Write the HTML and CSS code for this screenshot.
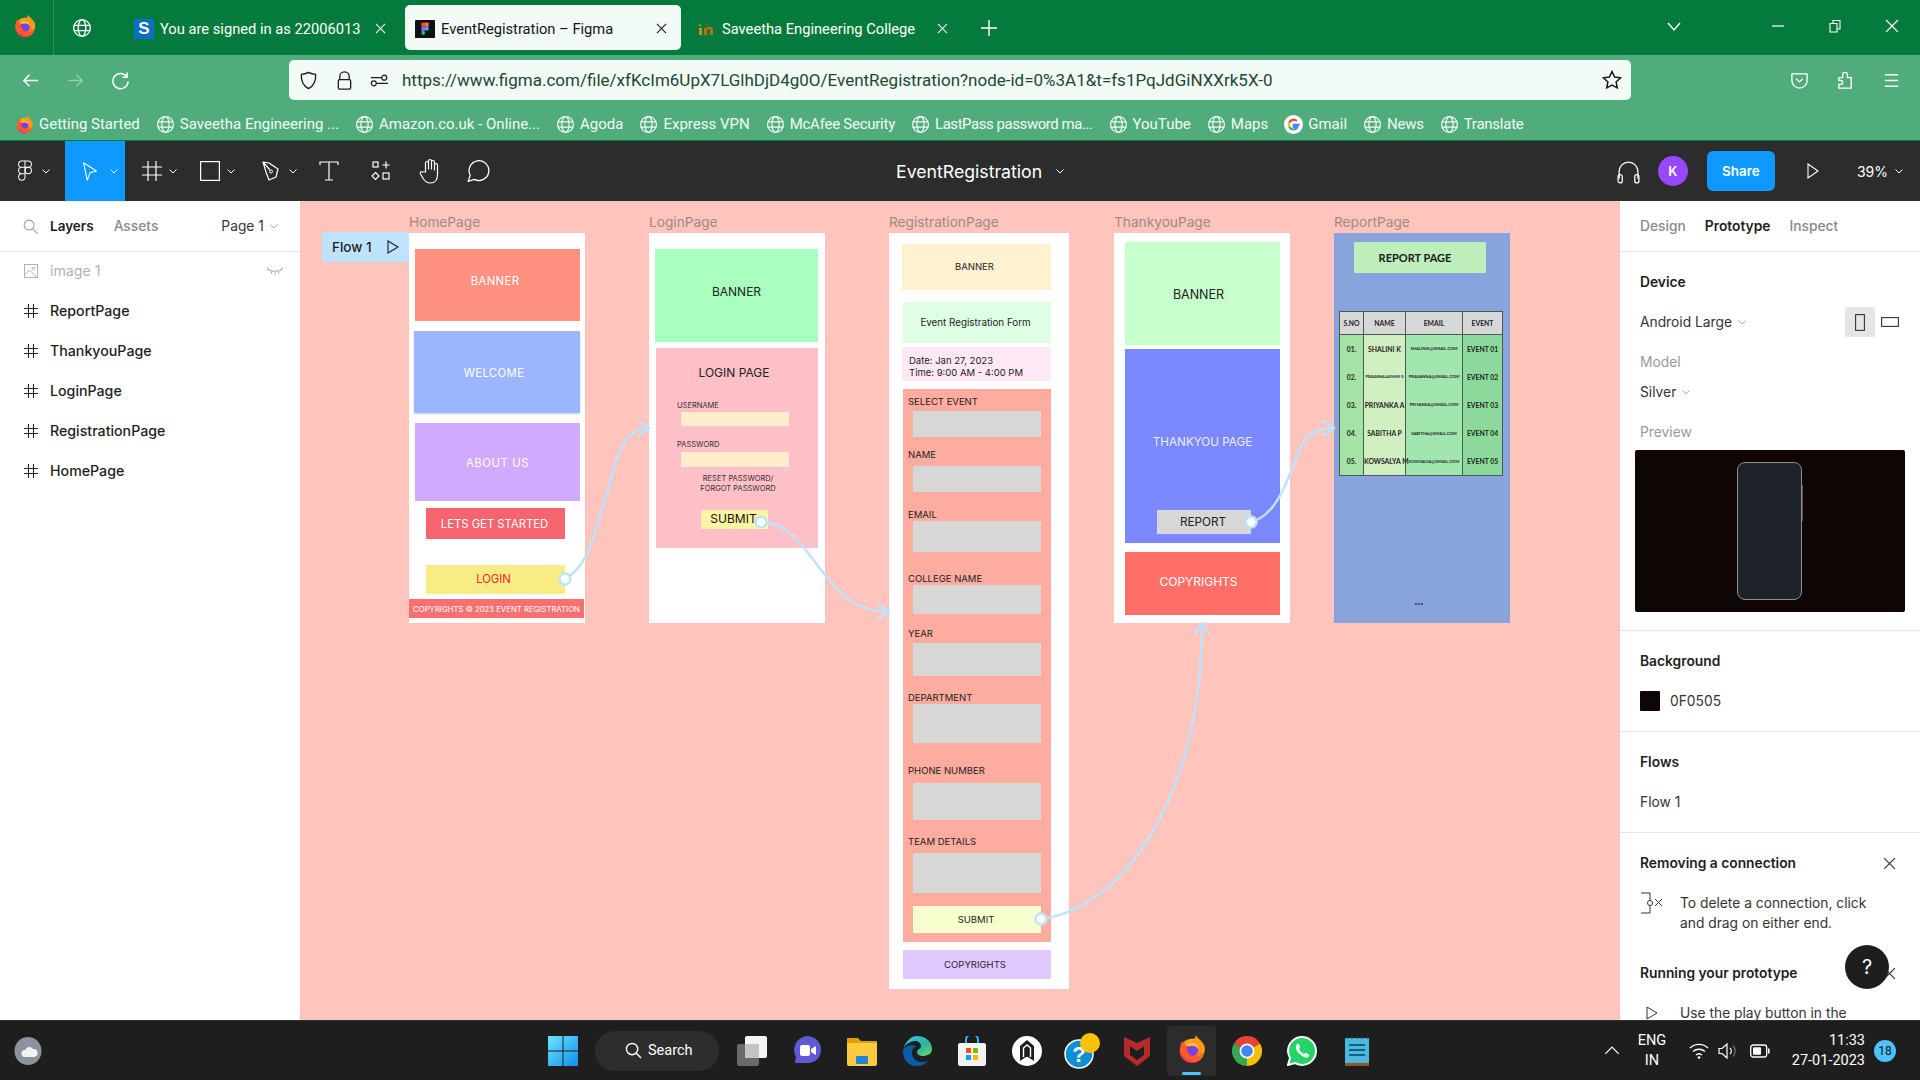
FILE: index.html
```html
<!DOCTYPE html>
<html lang="en">
<head>
  <meta charset="UTF-8">
  <title>EventRegistration – Figma</title>
  <link rel="stylesheet" href="styles.css">
</head>
<body>
  <svg class="icon-defs" aria-hidden="true">
    <defs>
      <linearGradient id="ffBody" x1="0.7" y1="0" x2="0.2" y2="1">
        <stop offset="0" stop-color="#ffc02e"/>
        <stop offset="0.5" stop-color="#ff7a1a"/>
        <stop offset="1" stop-color="#f0265e"/>
      </linearGradient>
      <linearGradient id="winBlue" x1="0" y1="0" x2="1" y2="1">
        <stop offset="0" stop-color="#6fe3ff"/>
        <stop offset="1" stop-color="#0f8fe8"/>
      </linearGradient>
      <linearGradient id="edgeGrad" x1="0" y1="0" x2="1" y2="1">
        <stop offset="0" stop-color="#35c1f1"/>
        <stop offset="0.6" stop-color="#2fb4a0"/>
        <stop offset="1" stop-color="#6fdc57"/>
      </linearGradient>
    </defs>
    <symbol id="i-globe" viewBox="0 0 20 20">
      <g fill="none" stroke="currentColor" stroke-width="1.3">
        <circle cx="10" cy="10" r="8.3"/>
        <ellipse cx="10" cy="10" rx="3.8" ry="8.3"/>
        <path d="M1.7 7.3h16.6M1.7 12.7h16.6"/>
      </g>
    </symbol>
    <symbol id="i-firefox" viewBox="0 0 32 32">
      <circle cx="16" cy="18" r="13" fill="url(#ffBody)"/>
      <path d="M20 1c2 4 7 6 9 11 1 3 1 6 0 8L14 9c2-2 6-4 6-8z" fill="#ff9a14"/>
      <circle cx="16" cy="17" r="6.5" fill="#7542e5"/>
      <path d="M5 8c-3 7-1 17 8 20 8 2 14-3 15-7-5 5-14 4-17-3-1-3 0-5 2-6-4 0-6-2-8-4z" fill="#ff5a2c"/>
      <path d="M9 12c3-3 8-3 11-1 2 1 3 3 3 5-3-3-6-4-9-3-2 0-4 0-5-1z" fill="#ffbd4f"/>
    </symbol>
    <symbol id="i-hash" viewBox="0 0 14 14">
      <path d="M4.5 0v14M9.5 0v14M0 4.5h14M0 9.5h14" fill="none" stroke="currentColor" stroke-width="1.1"/>
    </symbol>
    <symbol id="i-chev" viewBox="0 0 8 5">
      <path d="M.5.5 4 4 7.5.5" fill="none" stroke="currentColor" stroke-width="1"/>
    </symbol>
    <symbol id="i-close" viewBox="0 0 12 12">
      <path d="M1 1l10 10M11 1 1 11" fill="none" stroke="currentColor" stroke-width="1.1"/>
    </symbol>
  </svg>

  <div class="tabbar">
    <div class="browser-logo"><svg class="ff-icon"><use href="#i-firefox"/></svg></div>
    <div class="tab-globe"><svg class="globe-big"><use href="#i-globe"/></svg></div>
    <div class="tab">
      <span class="favicon fav-s">S</span>
      <span class="tab-title">You are signed in as 22006013</span>
      <svg class="tab-close"><use href="#i-close"/></svg>
    </div>
    <div class="tab tab-active">
      <svg class="favicon" viewBox="0 0 22 20">
        <rect width="22" height="20" rx="1" fill="#111"/>
        <rect x="7" y="3" width="4" height="4.5" fill="#f24e1e"/>
        <rect x="11" y="3" width="4" height="4.5" fill="#ff7262"/>
        <rect x="7" y="7.5" width="4" height="4.5" fill="#a259ff"/>
        <circle cx="13" cy="9.7" r="2.2" fill="#1abcfe"/>
        <rect x="7" y="12" width="4" height="4.5" rx="2" fill="#0acf83"/>
      </svg>
      <span class="tab-title">EventRegistration – Figma</span>
      <svg class="tab-close"><use href="#i-close"/></svg>
    </div>
    <div class="tab">
      <svg class="favicon" viewBox="0 0 20 20">
        <path d="M3 9h3v7H3zM2 7l2-2 2 2z" fill="#d9861a"/>
        <path d="M8 9h3v7H8zM11 8c3-1 6 0 6 3v5h-3v-5c0-1-2-1-3 0z" fill="#b5701c"/>
        <path d="M7 6l4-2 4 2-4 1z" fill="#3c6a2c"/>
      </svg>
      <span class="tab-title">Saveetha Engineering College</span>
      <svg class="tab-close"><use href="#i-close"/></svg>
    </div>
    <svg class="tab-plus" viewBox="0 0 16 16"><path d="M8 0v16M0 8h16" stroke="currentColor" stroke-width="1.4"/></svg>
    <svg class="tab-list" viewBox="0 0 14 9"><path d="M1 1l6 7 6-7" fill="none" stroke="currentColor" stroke-width="1.3"/></svg>
    <div class="win-buttons">
      <svg viewBox="0 0 14 14"><path d="M1 7h12" stroke="currentColor" stroke-width="1.2"/></svg>
      <svg viewBox="0 0 14 14"><path d="M2 4.5h7v8.500H2zM5 4.5V1.500h7v8.500H9" fill="none" stroke="currentColor" stroke-width="1.1"/></svg>
      <svg viewBox="0 0 14 14"><path d="M1 1l12 12M13 1 1 13" stroke="currentColor" stroke-width="1.1"/></svg>
    </div>
  </div>

  <div class="navbar">
    <svg class="nav-btn" viewBox="0 0 20 20"><path d="M18 10H3M9 4l-6 6 6 6" fill="none" stroke="currentColor" stroke-width="1.6"/></svg>
    <svg class="nav-btn nav-dim" viewBox="0 0 20 20"><path d="M2 10h15M11 4l6 6-6 6" fill="none" stroke="currentColor" stroke-width="1.6"/></svg>
    <svg class="nav-btn" viewBox="0 0 20 20"><path d="M16.500 6A8 8 0 1 0 18 11M17 1.500V6.500H12" fill="none" stroke="currentColor" stroke-width="1.6"/></svg>
    <div class="urlbar">
      <svg class="url-icon" viewBox="0 0 20 20"><path d="M10 1.500c2.500 1.500 4.500 2 7.500 2 .5 7-1.500 12-7.500 15-6-3-8-8-7.500-15 3 0 5-.5 7.500-2z" fill="none" stroke="#1c1c1c" stroke-width="1.4"/></svg>
      <svg class="url-icon url-lock" viewBox="0 0 20 20"><path d="M5 9V6a5 5 0 0 1 10 0v3" fill="none" stroke="#1c1c1c" stroke-width="1.4"/><rect x="3.500" y="9" width="13" height="10" rx="1.500" fill="none" stroke="#1c1c1c" stroke-width="1.4"/></svg>
      <svg class="url-icon url-perm" viewBox="0 0 20 20"><path d="M1 7h11M7 13h12" stroke="#1c1c1c" stroke-width="1.4"/><circle cx="15" cy="7" r="2.600" fill="none" stroke="#1c1c1c" stroke-width="1.3"/><circle cx="4" cy="13" r="2.600" fill="none" stroke="#1c1c1c" stroke-width="1.3"/></svg>
      <span class="url-text">https://www.figma.com/file/xfKcIm6UpX7LGlhDjD4g0O/EventRegistration?node-id=0%3A1&amp;t=fs1PqJdGiNXXrk5X-0</span>
      <svg class="url-star" viewBox="0 0 20 20"><path d="M10 1.500l2.600 5.600 6 .7-4.500 4.100 1.200 6L10 15l-5.300 2.900 1.200-6L1.400 7.800l6-.7z" fill="none" stroke="#1c1c1c" stroke-width="1.500"/></svg>
    </div>
    <div class="nav-right">
      <svg viewBox="0 0 20 20"><path d="M2 3h16v7a8 8 0 0 1-16 0z" fill="none" stroke="currentColor" stroke-width="1.400" stroke-linejoin="round"/><path d="M6.500 8l3.500 3.500L13.500 8" fill="none" stroke="currentColor" stroke-width="1.400"/></svg>
      <svg viewBox="0 0 20 20"><path d="M3 7h4V4a2.500 2.500 0 0 1 5 0v3h4v11H3v-4h2a2 2 0 0 0 0-4H3z" fill="none" stroke="currentColor" stroke-width="1.400"/></svg>
      <svg viewBox="0 0 20 20"><path d="M3 4h14M3 10h14M3 16h14" stroke="currentColor" stroke-width="1.500"/></svg>
    </div>
  </div>

  <div class="bookmarks">
    <span class="bookmark"><svg class="bm-icon"><use href="#i-firefox"/></svg>Getting Started</span>
    <span class="bookmark"><svg class="bm-icon"><use href="#i-globe"/></svg>Saveetha Engineering ...</span>
    <span class="bookmark"><svg class="bm-icon"><use href="#i-globe"/></svg>Amazon.co.uk - Online...</span>
    <span class="bookmark"><svg class="bm-icon"><use href="#i-globe"/></svg>Agoda</span>
    <span class="bookmark"><svg class="bm-icon"><use href="#i-globe"/></svg>Express VPN</span>
    <span class="bookmark bm-narrow"><svg class="bm-icon"><use href="#i-globe"/></svg>McAfee Security</span>
    <span class="bookmark bm-narrower"><svg class="bm-icon"><use href="#i-globe"/></svg>LastPass password ma...</span>
    <span class="bookmark"><svg class="bm-icon"><use href="#i-globe"/></svg>YouTube</span>
    <span class="bookmark"><svg class="bm-icon"><use href="#i-globe"/></svg>Maps</span>
    <span class="bookmark">
      <svg class="bm-icon" viewBox="0 0 20 20">
        <circle cx="10" cy="10" r="10" fill="#fff"/>
        <path d="M16.500 10.200h-6.300v2.300h3.700a3.900 3.900 0 0 1-3.700 2.700" fill="none" stroke="#4285f4" stroke-width="2.200"/>
        <path d="M10.200 15.200a5.200 5.200 0 0 1-4.700-3" fill="none" stroke="#34a853" stroke-width="2.200"/>
        <path d="M5.500 12.200a5.200 5.200 0 0 1 0-4.400" fill="none" stroke="#fbbc05" stroke-width="2.200"/>
        <path d="M5.500 7.800a5.200 5.200 0 0 1 8-1.500" fill="none" stroke="#ea4335" stroke-width="2.200"/>
      </svg>Gmail</span>
    <span class="bookmark bm-narrow"><svg class="bm-icon"><use href="#i-globe"/></svg>News</span>
    <span class="bookmark bm-narrow"><svg class="bm-icon"><use href="#i-globe"/></svg>Translate</span>
  </div>

  <div class="toolbar">
    <div class="tool tool-logo">
      <svg class="tool-icon" viewBox="0 0 16 24"><path d="M8 1H4.500a3.500 3.500 0 0 0 0 7H8zM8 1h3.500a3.500 3.500 0 0 1 0 7H8zM8 8H4.500a3.500 3.500 0 0 0 0 7H8zM8 15H4.500A3.500 3.500 0 1 0 8 18.500z" fill="none" stroke="#fff" stroke-width="1.100"/><circle cx="11.500" cy="11.500" r="3.500" fill="none" stroke="#fff" stroke-width="1.100"/></svg>
      <svg class="tool-chev"><use href="#i-chev"/></svg>
    </div>
    <div class="tool tool-move">
      <svg class="tool-icon" viewBox="0 0 20 24"><path d="M3 3l14 9-7 2-3 8z" fill="none" stroke="#fff" stroke-width="1.200" stroke-linejoin="round"/></svg>
      <svg class="tool-chev"><use href="#i-chev"/></svg>
    </div>
    <div class="tool tool-frame">
      <svg class="tool-icon" viewBox="0 0 20 20"><path d="M6 0v20M14 0v20M0 6h20M0 14h20" fill="none" stroke="#fff" stroke-width="1.200"/></svg>
      <svg class="tool-chev"><use href="#i-chev"/></svg>
    </div>
    <div class="tool tool-rect">
      <svg class="tool-icon" viewBox="0 0 20 20"><rect x=".6" y=".6" width="18.800" height="18.800" fill="none" stroke="#fff" stroke-width="1.200"/></svg>
      <svg class="tool-chev"><use href="#i-chev"/></svg>
    </div>
    <div class="tool tool-pen">
      <svg class="tool-icon" viewBox="0 0 20 20"><path d="M1 1l6 1 9 6-2 8-7 3-3-8zM1 1l7 8" fill="none" stroke="#fff" stroke-width="1.200" stroke-linejoin="round"/><circle cx="9" cy="10.500" r="1.500" fill="none" stroke="#fff"/></svg>
      <svg class="tool-chev"><use href="#i-chev"/></svg>
    </div>
    <div class="tool tool-t">
      <svg class="tool-icon" viewBox="0 0 20 20"><path d="M1 4V1h18v3M10 1v18M6 19h8" fill="none" stroke="#fff" stroke-width="1.200"/></svg>
    </div>
    <div class="tool tool-comp">
      <svg class="tool-icon" viewBox="0 0 20 20"><rect x="2" y="1" width="5" height="5" fill="none" stroke="#fff" stroke-width="1.200"/><path d="M15 .5v7M11.500 4h7" stroke="#fff" stroke-width="1.200"/><path d="M4.500 11.500l3.500 3.500-3.500 3.500L1 15z" fill="none" stroke="#fff" stroke-width="1.200"/><rect x="12" y="12" width="6" height="6" fill="none" stroke="#fff" stroke-width="1.200"/></svg>
    </div>
    <div class="tool tool-hand">
      <svg class="tool-icon" viewBox="0 0 24 26"><path d="M7 14V5a1.500 1.500 0 0 1 3 0v6V3a1.500 1.500 0 0 1 3 0v8V4a1.500 1.500 0 0 1 3 0v8V7a1.500 1.500 0 0 1 3 0v10c0 5-3 8-7 8-3 0-5-1-7-4l-3-5c-1-2 1-3 2-2z" fill="none" stroke="#fff" stroke-width="1.200" stroke-linejoin="round"/></svg>
    </div>
    <div class="tool tool-comment">
      <svg class="tool-icon" viewBox="0 0 24 24"><path d="M3 22l2-6a9.500 9.500 0 1 1 4 4z" fill="none" stroke="#fff" stroke-width="1.200" stroke-linejoin="round"/></svg>
    </div>
    <div class="file-title">EventRegistration<svg class="tool-chev"><use href="#i-chev"/></svg></div>
    <div class="tool-right">
      <svg class="headphones" viewBox="0 0 24 24"><path d="M3 19v-7a9 9 0 0 1 18 0v7" fill="none" stroke="#fff" stroke-width="1.200"/><rect x="2" y="15" width="4" height="8" rx="2" fill="none" stroke="#fff" stroke-width="1.200"/><rect x="18" y="15" width="4" height="8" rx="2" fill="none" stroke="#fff" stroke-width="1.200"/></svg>
      <span class="avatar">K</span>
      <span class="share-btn">Share</span>
      <svg class="present" viewBox="0 0 12 16"><path d="M1 1l10 7-10 7z" fill="none" stroke="#fff" stroke-width="1.100"/></svg>
      <span class="zoom-level">39%<svg class="tool-chev"><use href="#i-chev"/></svg></span>
    </div>
  </div>

  <div class="workspace">
    <aside class="left-panel">
      <div class="left-head">
        <svg class="search-icon" viewBox="0 0 16 16"><circle cx="6.500" cy="6.500" r="5.300" fill="none" stroke="#999" stroke-width="1.100"/><path d="M10.500 10.500l5 5" stroke="#999" stroke-width="1.100"/></svg>
        <span class="head-on">Layers</span>
        <span class="head-off">Assets</span>
        <span class="page-pick">Page 1<svg class="small-chev"><use href="#i-chev"/></svg></span>
      </div>
      <ul class="layers">
        <li class="layer layer-hidden">
          <svg class="layer-icon" viewBox="0 0 14 14"><rect x=".5" y=".5" width="13" height="13" fill="none" stroke="#b3b3b3"/><circle cx="9.500" cy="4.500" r="1.300" fill="none" stroke="#b3b3b3"/><path d="M.5 11l5-5 7.500 7.500" fill="none" stroke="#b3b3b3"/></svg>
          image 1
          <svg class="eye-off" viewBox="0 0 18 8"><path d="M1 2c5 3 11 3 16 0M1 0l3 3.500M17 0l-3 3.500M5 7l1-3M13 7l-1-3M9 8V5" fill="none" stroke="#999" stroke-width=".8"/></svg>
        </li>
        <li class="layer"><svg class="layer-icon"><use href="#i-hash"/></svg>ReportPage</li>
        <li class="layer"><svg class="layer-icon"><use href="#i-hash"/></svg>ThankyouPage</li>
        <li class="layer"><svg class="layer-icon"><use href="#i-hash"/></svg>LoginPage</li>
        <li class="layer"><svg class="layer-icon"><use href="#i-hash"/></svg>RegistrationPage</li>
        <li class="layer"><svg class="layer-icon"><use href="#i-hash"/></svg>HomePage</li>
      </ul>
    </aside>

    <main class="canvas">
      <div class="flow-tag">Flow 1<svg class="flow-play" viewBox="0 0 12 14"><path d="M1 1l10 6-10 6z" fill="none" stroke="#1e1e1e" stroke-width="1.100"/></svg></div>

      <section class="frame-wrap wrap-home">
        <div class="frame-label">HomePage</div>
        <div class="frame">
          <div class="blk light home-banner">BANNER</div>
          <div class="blk light home-welcome">WELCOME</div>
          <div class="blk light home-about">ABOUT US</div>
          <div class="blk light home-start">LETS GET STARTED</div>
          <div class="blk home-login">LOGIN</div>
          <div class="blk light home-copy">COPYRIGHTS © 2023 EVENT REGISTRATION</div>
        </div>
      </section>

      <section class="frame-wrap wrap-login">
        <div class="frame-label">LoginPage</div>
        <div class="frame">
          <div class="blk login-banner">BANNER</div>
          <div class="login-box">
            <div class="login-title">LOGIN PAGE</div>
            <div class="login-label label-user">USERNAME</div>
            <div class="login-input input-user"></div>
            <div class="login-label label-pass">PASSWORD</div>
            <div class="login-input input-pass"></div>
            <div class="login-reset">RESET PASSWORD/<br>FORGOT PASSWORD</div>
            <div class="blk login-submit">SUBMIT</div>
          </div>
        </div>
      </section>

      <section class="frame-wrap wrap-reg">
        <div class="frame-label">RegistrationPage</div>
        <div class="frame frame-reg">
          <div class="blk reg-banner">BANNER</div>
          <div class="blk reg-title">Event Registration Form</div>
          <div class="reg-date">Date: Jan 27, 2023<br>Time: 9:00 AM - 4:00 PM</div>
          <div class="reg-form">
            <div class="reg-field field-select"><div class="reg-label">SELECT EVENT</div><div class="reg-input"></div></div>
            <div class="reg-field field-name"><div class="reg-label">NAME</div><div class="reg-input"></div></div>
            <div class="reg-field field-email"><div class="reg-label">EMAIL</div><div class="reg-input"></div></div>
            <div class="reg-field field-college"><div class="reg-label">COLLEGE NAME</div><div class="reg-input"></div></div>
            <div class="reg-field field-year"><div class="reg-label">YEAR</div><div class="reg-input"></div></div>
            <div class="reg-field field-dept"><div class="reg-label">DEPARTMENT</div><div class="reg-input"></div></div>
            <div class="reg-field field-phone"><div class="reg-label">PHONE NUMBER</div><div class="reg-input"></div></div>
            <div class="reg-field field-team"><div class="reg-label">TEAM DETAILS</div><div class="reg-input"></div></div>
            <div class="blk reg-submit">SUBMIT</div>
          </div>
          <div class="blk reg-copy">COPYRIGHTS</div>
        </div>
      </section>

      <section class="frame-wrap wrap-thanks">
        <div class="frame-label">ThankyouPage</div>
        <div class="frame">
          <div class="blk thanks-banner">BANNER</div>
          <div class="thanks-main">
            <div class="thanks-text">THANKYOU PAGE</div>
            <div class="blk thanks-report">REPORT</div>
          </div>
          <div class="blk light thanks-copy">COPYRIGHTS</div>
        </div>
      </section>

      <section class="frame-wrap wrap-report">
        <div class="frame-label">ReportPage</div>
        <div class="frame frame-report">
          <div class="blk report-title">REPORT PAGE</div>
          <table class="report-table">
            <thead>
              <tr><th>S.NO</th><th>NAME</th><th>EMAIL</th><th>EVENT</th></tr>
            </thead>
            <tbody>
              <tr><td>01.</td><td>SHALINI K</td><td>SHALINIK@GMAIL.COM</td><td>EVENT 01</td></tr>
              <tr><td>02.</td><td class="tiny-name">PRASANNALAKSHMI G</td><td>PRASANNA@GMAIL.COM</td><td>EVENT 02</td></tr>
              <tr><td>03.</td><td>PRIYANKA A</td><td>PRIYANKA@GMAIL.COM</td><td>EVENT 03</td></tr>
              <tr><td>04.</td><td>SABITHA P</td><td>SABITHA@GMAIL.COM</td><td>EVENT 04</td></tr>
              <tr><td>05.</td><td class="nowrap-name">KOWSALYA M</td><td>KOWSALYA@GMAIL.COM</td><td>EVENT 05</td></tr>
            </tbody>
          </table>
          <div class="report-dots">•••</div>
        </div>
      </section>

      <!-- prototype connections, viewBox is in screen pixels -->
      <svg class="links" viewBox="300 201 1320 819">
        <g fill="none" stroke="#bde3ff" stroke-width="2.5" stroke-linecap="round" stroke-linejoin="round">
          <path d="M565 579C590 565 595 530 605 500 615 465 620 428 649 428"/>
          <path d="M639 421l10 7-10 7"/>
          <path d="M762 522C790 522 805 550 825 575 845 600 860 612 889 611"/>
          <path d="M879 604l10 7-10 7"/>
          <path d="M1041 919C1120 910 1202 800 1202 623"/>
          <path d="M1195 633l7-10 7 10"/>
          <path d="M1251 522C1280 515 1290 470 1302 445 1310 432 1320 428 1334 428"/>
          <path d="M1324 421l10 7-10 7"/>
        </g>
        <g fill="#fff" stroke="#bde3ff" stroke-width="2.5">
          <circle cx="565" cy="579" r="5.500"/>
          <circle cx="761" cy="522" r="5.500"/>
          <circle cx="1041" cy="919" r="5.500"/>
          <circle cx="1251" cy="522" r="5.500"/>
        </g>
      </svg>
    </main>

    <aside class="right-panel">
      <div class="right-tabs">
        <span class="rtab">Design</span>
        <span class="rtab rtab-on">Prototype</span>
        <span class="rtab">Inspect</span>
      </div>
      <section class="prop-section">
        <div class="prop-row prop-title">Device</div>
        <div class="prop-row">
          Android Large<svg class="small-chev"><use href="#i-chev"/></svg>
          <span class="orient orient-on"><svg viewBox="0 0 10 17"><rect x=".6" y=".6" width="8.800" height="15.800" fill="none" stroke="#333" stroke-width="1.100"/></svg></span>
          <span class="orient-land"><svg viewBox="0 0 18 10"><rect x=".6" y=".6" width="16.800" height="8.800" fill="none" stroke="#333" stroke-width="1.100"/></svg></span>
        </div>
        <div class="prop-row prop-short prop-grey prop-model">Model</div>
        <div class="prop-row prop-short">Silver<svg class="small-chev"><use href="#i-chev"/></svg></div>
        <div class="prop-row prop-short prop-grey prop-preview">Preview</div>
        <div class="preview-box"><div class="phone"></div></div>
      </section>
      <section class="prop-section">
        <div class="prop-row prop-title">Background</div>
        <div class="prop-row"><span class="swatch"></span>0F0505</div>
      </section>
      <section class="prop-section">
        <div class="prop-row prop-title">Flows</div>
        <div class="prop-row">Flow 1</div>
      </section>
      <section class="help-section">
        <div class="prop-row prop-title">Removing a connection<svg class="help-x"><use href="#i-close"/></svg></div>
        <div class="help-body">
          <svg class="help-icon" viewBox="0 0 24 22"><path d="M1 1h9v20H1" fill="none" stroke="#333" stroke-width="1"/><circle cx="10" cy="11" r="2.500" fill="#fff" stroke="#333"/><path d="M15 7l7 7M22 7l-7 7" stroke="#333"/></svg>
          <p>To delete a connection, click and drag on either end.</p>
        </div>
        <div class="prop-row prop-title help-next">Running your prototype<svg class="help-x"><use href="#i-close"/></svg></div>
        <div class="help-body">
          <svg class="help-icon play-icon" viewBox="0 0 12 14"><path d="M1 1l10 6-10 6z" fill="none" stroke="#333"/></svg>
          <p>Use the play button in the</p>
        </div>
      </section>
      <div class="help-btn">?</div>
    </aside>
  </div>

  <footer class="taskbar">
    <svg class="weather" viewBox="0 0 28 28">
      <ellipse cx="14" cy="14" rx="13.500" ry="14" fill="#8b949e"/>
      <path d="M11 20a3.500 3.500 0 0 1 0-7 4.500 4.500 0 0 1 8-1 4 4 0 0 1 1 8z" fill="#f2f2f2"/>
    </svg>
    <div class="task-apps">
      <div class="app">
        <svg viewBox="0 0 30 30"><path d="M0 0h14.500v14.500H0zM15.500 0H30v14.500H15.500zM0 15.500h14.500V30H0zM15.500 15.500H30V30H15.500z" fill="url(#winBlue)"/></svg>
      </div>
      <div class="search-pill">
        <svg viewBox="0 0 18 18"><circle cx="7.500" cy="7.500" r="6" fill="none" stroke="#fff" stroke-width="1.500"/><path d="M12 12l5 5" stroke="#fff" stroke-width="1.500"/></svg>
        Search
      </div>
      <div class="app">
        <svg viewBox="0 0 30 30"><rect x="0" y="8" width="22" height="22" rx="2" fill="#6a6a6a"/><rect x="8" y="0" width="22" height="22" rx="2" fill="#f5f5f5"/><rect x="8" y="8" width="14" height="14" fill="#c4c4c4"/></svg>
      </div>
      <div class="app">
        <svg viewBox="0 0 30 30"><path d="M15 0a14 14 0 0 1 14 14c0 8-6 13-13 13H3l1-6A14 14 0 0 1 15 0z" fill="#5f5ad1"/><rect x="8" y="9" width="10" height="11" rx="2" fill="#fff"/><path d="M19 13l5-3v9l-5-3z" fill="#fff"/></svg>
      </div>
      <div class="app">
        <svg viewBox="0 0 30 30"><path d="M0 2h11l3 3h16v4H0z" fill="#e0a100"/><path d="M0 7h30v21a2 2 0 0 1-2 2H2a2 2 0 0 1-2-2z" fill="#fdca3f"/><rect x="9" y="20" width="12" height="8" rx="1" fill="#1a86d8"/></svg>
      </div>
      <div class="app">
        <svg viewBox="0 0 30 30"><path d="M15 0c9 0 15 6 15 13 0 5-5 7-9 7-4 0-6-2-6-4 0-3 4-3 4-6 0-3-3-5-6-5C7 5 1 10 1 16 2 7 8 0 15 0z" fill="url(#edgeGrad)"/><path d="M1 16C1 24 7 30 15 30c5 0 8-2 11-5-6 2-13 1-15-4-2-4-1-10 4-11-7-2-14 1-14 6z" fill="#0b5cad"/></svg>
      </div>
      <div class="app">
        <svg viewBox="0 0 30 30"><path d="M9 7V4a6 6 0 0 1 12 0v3" fill="none" stroke="#29b6f6" stroke-width="2"/><rect x="1" y="7" width="28" height="23" rx="2" fill="#f3f3f3"/><rect x="9" y="12" width="5" height="5" fill="#f25022"/><rect x="16" y="12" width="5" height="5" fill="#7fba00"/><rect x="9" y="19" width="5" height="5" fill="#00a4ef"/><rect x="16" y="19" width="5" height="5" fill="#ffb900"/></svg>
      </div>
      <div class="app">
        <svg viewBox="0 0 30 30"><circle cx="15" cy="15" r="15" fill="#fff"/><path d="M8 25V10l7-6 7 6v15l-6-4h-2z" fill="#1e1e1e"/><path d="M11.500 21v-9l3.500-3 3.500 3v9" fill="none" stroke="#fff" stroke-width="1.400"/></svg>
      </div>
      <div class="app app-help">
        <svg viewBox="0 0 36 36"><circle cx="15" cy="21" r="14" fill="#0d8fd6" stroke="#fff" stroke-width="1.500"/><text x="15" y="29" text-anchor="middle" class="help-q">?</text><circle cx="26" cy="10" r="10" fill="#ffc107"/></svg>
      </div>
      <div class="app">
        <svg class="mcafee-icon" viewBox="0 0 26 30"><path d="M0 1l13 6 13-6v19l-13 10L0 20z" fill="#b52b2b"/><path d="M6 10l7 5 7-5v9l-7 5-7-5z" fill="#1e1e1e"/></svg>
      </div>
      <div class="app app-active">
        <svg class="ff-task"><use href="#i-firefox"/></svg>
        <span class="active-bar"></span>
      </div>
      <div class="app">
        <svg viewBox="0 0 30 30"><path d="M15 15 2 7.500a15 15 0 0 1 26 0z" fill="#ea4335"/><path d="M15 15 28 7.500A15 15 0 0 1 15 30z" fill="#fbbc05"/><path d="M15 15V30A15 15 0 0 1 2 7.500z" fill="#34a853"/><circle cx="15" cy="15" r="7.500" fill="#fff"/><circle cx="15" cy="15" r="5.800" fill="#4285f4"/></svg>
      </div>
      <div class="app">
        <svg viewBox="0 0 30 30"><path d="M15 1a14 14 0 0 1 0 28c-3 0-5-1-7-2l-7 2 2-7c-1-2-2-4-2-7A14 14 0 0 1 15 1z" fill="#25d366" stroke="#fff" stroke-width="2"/><path d="M10 8c2-1 3 2 3 3s-1 2-1 2c1 2 3 4 5 5 0 0 1-1 2-1s4 2 3 3c-1 2-3 2-5 1-4-2-7-5-8-8 0-2 0-4 1-5z" fill="#fff"/></svg>
      </div>
      <div class="app">
        <svg class="note-icon" viewBox="0 0 24 30"><rect y="2" width="24" height="28" fill="#4cb8dc"/><rect y="27" width="24" height="3" fill="#8b5a2b"/><path d="M2 0v3M7 0v3M12 0v3M17 0v3M22 0v3" stroke="#17465a"/><path d="M4 9h16M4 14h16M4 19h16" stroke="#0f5f80" stroke-width="2"/></svg>
      </div>
    </div>
    <div class="tray">
      <svg class="tray-chev" viewBox="0 0 14 8"><path d="M1 7l6-6 6 6" fill="none" stroke="#fff" stroke-width="1.100"/></svg>
      <div class="tray-lang">ENG<br>IN</div>
      <svg class="tray-wifi" viewBox="0 0 20 16"><path d="M1 5a13 13 0 0 1 18 0M4 8.500a9 9 0 0 1 12 0M7 12a4.500 4.500 0 0 1 6 0" fill="none" stroke="#fff" stroke-width="1.400"/><circle cx="10" cy="14.500" r="1.300" fill="#fff"/></svg>
      <svg class="tray-sound" viewBox="0 0 20 16"><path d="M1 5.500h3L9 1v14l-5-4.500H1z" fill="none" stroke="#fff" stroke-width="1.200"/><path d="M12 5a4 4 0 0 1 0 6" fill="none" stroke="#fff" stroke-width="1.100"/><path d="M15 2.500a8 8 0 0 1 0 11" fill="none" stroke="#777" stroke-width="1.100"/></svg>
      <svg class="tray-batt" viewBox="0 0 20 14"><rect x=".7" y="1" width="16" height="12" rx="2.500" fill="none" stroke="#fff" stroke-width="1.300"/><rect x="3" y="3.200" width="8" height="7.600" rx="1" fill="#fff"/><rect x="18" y="4.500" width="1.600" height="5" fill="#fff"/></svg>
      <div class="tray-clock">11:33<br>27-01-2023</div>
      <span class="tray-badge">18</span>
    </div>
  </footer>
</body>
</html>
```

FILE: styles.css
```css
* {
  box-sizing: border-box;
}

html, body {
  margin: 0;
  height: 100%;
  overflow: hidden;
}

body {
  display: flex;
  flex-direction: column;
  width: 1920px;
  height: 1080px;
  font-family: Inter, "Noto Sans", sans-serif;
  font-size: 13.800px;
  color: #333;
  background: #fff;
}

.icon-defs {
  position: absolute;
  width: 0;
  height: 0;
}

/* browser chrome */
.tabbar {
  display: flex;
  align-items: center;
  flex: 0 0 55px;
  color: #fff;
  background: #047b3c;
  font-family: Roboto, sans-serif;
  font-size: 14.700px;
}

.browser-logo {
  display: flex;
  align-items: center;
  justify-content: flex-start;
  width: 54px;
  height: 55px;
  padding-left: 13px;
  border-right: 1px solid #2c9059;
}

.ff-icon {
  width: 24px;
  height: 24px;
  margin-top: -3px;
}

.tab-globe {
  display: flex;
  justify-content: center;
  width: 56px;
  margin-right: 14px;
}

.globe-big {
  width: 20px;
  height: 20px;
  color: #fff;
}

.tab {
  display: flex;
  align-items: center;
  width: 276px;
  height: 45px;
  margin-right: 5px;
  padding: 2px 14px 0 10px;
  border-radius: 5px;
}

.tab-active {
  color: #15141a;
  background: #f2fbf6;
}

.favicon {
  flex: 0 0 20px;
  width: 20px;
  height: 20px;
  margin-right: 6px;
}

.fav-s {
  font-family: "Liberation Sans", sans-serif;
  font-size: 17px;
  font-weight: 700;
  line-height: 20px;
  text-align: center;
  color: #fff;
  background: #0b6fc2;
}

.tab-title {
  flex: 1;
  white-space: nowrap;
}

.tab-close {
  flex: 0 0 11px;
  width: 11px;
  height: 11px;
}

.tab-plus {
  width: 16px;
  height: 16px;
  margin-left: 14px;
}

.tab-list {
  width: 14px;
  height: 9px;
  margin-left: 670px;
  margin-top: -2px;
}

.win-buttons {
  display: flex;
  gap: 43px;
  margin-left: 90px;
  margin-top: -4px;
}

.win-buttons svg {
  width: 14px;
  height: 14px;
}

.navbar {
  display: flex;
  align-items: center;
  flex: 0 0 50px;
  padding: 5px 0 5px 21px;
  color: #fff;
  background: #50ac7a;
}

.nav-btn {
  width: 19px;
  height: 19px;
  margin-right: 26px;
}

.nav-dim {
  opacity: .4;
}

.urlbar {
  display: flex;
  align-items: center;
  width: 1342px;
  height: 40px;
  margin-left: 133px;
  padding-left: 10px;
  border-radius: 5px;
  background: #f2fbf6;
}

.url-icon {
  width: 19px;
  height: 19px;
}

.url-lock {
  margin-left: 17px;
}

.url-perm {
  margin-left: 16px;
}

.url-text {
  flex: 1;
  margin-left: 13px;
  font-family: Roboto, sans-serif;
  font-size: 17px;
  color: #204832;
  white-space: nowrap;
}

.url-star {
  width: 20px;
  height: 20px;
  margin-right: 9px;
}

.nav-right {
  display: flex;
  gap: 27px;
  margin-left: 159px;
}

.nav-right svg {
  width: 19px;
  height: 19px;
}

.bookmarks {
  display: flex;
  align-items: center;
  flex: 0 0 36px;
  gap: 16px;
  padding: 3px 0 0 15px;
  border-bottom: 1px solid #047b3c;
  color: #f2fbf6;
  background: #50ac7a;
  font-family: Roboto, sans-serif;
  font-size: 15px;
  white-space: nowrap;
}

.bookmark {
  display: flex;
  align-items: center;
  gap: 5px;
}

.bm-narrow {
  letter-spacing: -.25px;
}

.bm-narrower {
  letter-spacing: -.45px;
}

.bm-icon {
  width: 19px;
  height: 19px;
}

/* figma toolbar */
.toolbar {
  display: flex;
  align-items: stretch;
  flex: 0 0 60px;
  color: #fff;
  background: #2c2c2c;
}

.tool {
  display: flex;
  align-items: center;
  justify-content: center;
  gap: 7px;
  width: 60px;
}

.tool-logo {
  width: 65px;
}

.tool-move {
  gap: 10px;
  padding-left: 7px;
  background: #0d99ff;
}

.tool-frame {
  padding-left: 8px;
}

.tool-rect {
  padding-left: 5px;
}

.tool-pen {
  padding-left: 9px;
}

.tool-icon {
  width: 20px;
  height: 22px;
}

.tool-chev {
  width: 8px;
  height: 5px;
  color: #fff;
}

.tool-t {
  width: 48px;
}

.tool-comp {
  width: 52px;
  padding-left: 3px;
}

.tool-hand {
  width: 50px;
}

.tool-hand .tool-icon,
.tool-comment .tool-icon {
  width: 25px;
  height: 26px;
}

.tool-comment {
  width: 50px;
  padding-right: 5px;
}

.file-title {
  display: flex;
  align-items: center;
  gap: 14px;
  margin-left: 391px;
  font-size: 17.700px;
}

.tool-right {
  display: flex;
  align-items: center;
  margin-left: auto;
}

.headphones {
  width: 25px;
  height: 25px;
}

.avatar {
  width: 30px;
  height: 30px;
  margin-left: 17px;
  border-radius: 50%;
  font-size: 13px;
  font-weight: 600;
  line-height: 30px;
  text-align: center;
  background: #9747ff;
}

.share-btn {
  width: 68px;
  height: 40px;
  margin-left: 19px;
  border-radius: 6px;
  font-size: 13.500px;
  font-weight: 600;
  line-height: 40px;
  text-align: center;
  background: #0d99ff;
}

.present {
  width: 12px;
  height: 16px;
  margin-left: 32px;
}

.zoom-level {
  display: flex;
  align-items: center;
  gap: 7px;
  margin-left: 38px;
  margin-right: 17px;
  font-size: 14px;
}

/* panels */
.workspace {
  display: flex;
  flex: 0 0 819px;
  overflow: hidden;
}

.left-panel {
  flex: 0 0 300px;
  background: #fff;
}

.left-head {
  display: flex;
  align-items: center;
  height: 51px;
  padding-left: 23px;
  border-bottom: 1px solid #e5e5e5;
}

.search-icon {
  width: 15px;
  height: 15px;
  margin-right: 12px;
}

.head-on {
  font-size: 13.500px;
  font-weight: 600;
  color: #1e1e1e;
}

.head-off {
  margin-left: 20px;
  font-weight: 500;
  color: #8a8a8a;
}

.page-pick {
  display: flex;
  align-items: center;
  gap: 6px;
  margin-left: 63px;
  color: #333;
}

.small-chev {
  width: 8px;
  height: 5px;
  margin-left: 6px;
  color: #a8a8a8;
}

.page-pick .small-chev {
  margin-left: 0;
}

.layers {
  margin: -1.500px 0 0;
  padding: 0;
  list-style: none;
}

.layer {
  display: flex;
  align-items: center;
  height: 40px;
  padding-left: 24px;
  font-size: 14.200px;
  font-weight: 500;
  color: #1e1e1e;
}

.layer-hidden {
  position: relative;
  font-weight: 400;
  color: #b3b3b3;
}

.layer-icon {
  width: 14px;
  height: 14px;
  margin-right: 12px;
  color: #222;
}

.eye-off {
  position: absolute;
  right: 16px;
  top: 16px;
  width: 18px;
  height: 8px;
}

.right-panel {
  position: relative;
  flex: 0 0 300px;
  background: #fff;
  overflow: hidden;
}

.right-tabs {
  display: flex;
  align-items: center;
  gap: 19px;
  height: 51px;
  padding-left: 20px;
  border-bottom: 1px solid #e5e5e5;
}

.rtab {
  font-weight: 500;
  color: #8a8a8a;
}

.rtab-on {
  font-weight: 600;
  color: #1e1e1e;
}

.prop-section {
  padding: 10px 0;
  border-bottom: 1px solid #e5e5e5;
}

.prop-section:first-of-type {
  padding-bottom: 18px;
}

.prop-row {
  position: relative;
  display: flex;
  align-items: center;
  height: 40px;
  padding-left: 20px;
  color: #333;
}

.prop-title {
  font-weight: 600;
  color: #1e1e1e;
}

.prop-short {
  height: 30px;
}

.prop-model {
  margin-top: 5px;
}

.prop-preview {
  margin-top: 10px;
}

.prop-grey {
  color: #999;
}

.orient {
  position: absolute;
  left: 225px;
  top: 5px;
  display: flex;
  align-items: center;
  justify-content: center;
  width: 30px;
  height: 30px;
  border-radius: 2px;
}

.orient-on {
  background: #e5e5e5;
}

.orient svg {
  width: 10px;
  height: 17px;
}

.orient-land {
  position: absolute;
  left: 261px;
  top: 15px;
  display: flex;
}

.orient-land svg {
  width: 18px;
  height: 10px;
}

.preview-box {
  display: flex;
  justify-content: center;
  width: 270px;
  height: 162px;
  margin: 3px 0 0 15px;
  padding-top: 12px;
  border-radius: 2px;
  background: #0f0505;
}

.phone {
  position: relative;
  width: 65px;
  height: 138px;
  margin-left: -2px;
  border: 1.500px solid #8d8d8d;
  border-radius: 8px;
  background: #1e232b;
}

.phone::after {
  content: "";
  position: absolute;
  right: -2.500px;
  top: 22px;
  width: 1px;
  height: 36px;
  background: #555;
}

.swatch {
  width: 20px;
  height: 20px;
  margin-right: 10px;
  border-radius: 1px;
  background: #0f0505;
}

.help-section {
  padding-top: 10px;
}

.help-x {
  position: absolute;
  right: 24px;
  width: 13px;
  height: 13px;
  color: #333;
}

.help-body {
  display: flex;
  margin-top: 10px;
  padding-left: 20px;
}

.help-body p {
  width: 190px;
  margin: 0;
  line-height: 20px;
}

.help-icon {
  flex: 0 0 24px;
  width: 24px;
  height: 22px;
  margin: -1px 16px 0 0;
}

.play-icon {
  height: 14px;
  margin-top: 3px;
}

.help-next {
  margin-top: 20px;
}

.help-btn {
  position: absolute;
  left: 225px;
  top: 744px;
  width: 44px;
  height: 44px;
  border-radius: 50%;
  font-size: 20px;
  line-height: 44px;
  text-align: center;
  color: #fff;
  background: #1e1e1e;
}

/* canvas */
.canvas {
  position: relative;
  flex: 1;
  background: #ffc4bc;
  overflow: hidden;
}

.links {
  position: absolute;
  left: 0;
  top: 0;
  width: 1320px;
  height: 819px;
}

.flow-tag {
  position: absolute;
  left: 22px;
  top: 31px;
  display: flex;
  align-items: center;
  gap: 15px;
  width: 87px;
  height: 30px;
  padding-left: 10px;
  font-size: 13.500px;
  font-weight: 500;
  color: #1e1e1e;
  background: #bde3ff;
}

.flow-play {
  width: 12px;
  height: 14px;
}

.frame-wrap {
  position: absolute;
  top: 13px;
}

.wrap-home {
  left: 109px;
}

.wrap-login {
  left: 349px;
}

.wrap-reg {
  left: 589px;
}

.wrap-thanks {
  left: 814px;
}

.wrap-report {
  left: 1034px;
}

.frame-label {
  height: 16px;
  margin-bottom: 3px;
  font-size: 13.700px;
  line-height: 16px;
  color: #a08a86;
  white-space: nowrap;
}

.frame {
  display: flow-root;
  width: 176px;
  height: 390px;
  background: #fff;
}

.blk {
  display: flex;
  align-items: center;
  justify-content: center;
  font-size: 11.300px;
  color: #222;
}

.light {
  color: #fff;
}

.home-banner {
  width: 165px;
  height: 72px;
  margin: 16px 0 0 6px;
  padding: 0 5px 9px 0;
  letter-spacing: .4px;
  background: #ff9180;
}

.home-welcome {
  width: 166px;
  height: 82px;
  margin: 10px 0 0 5px;
  padding: 1px 6px 0 0;
  letter-spacing: .4px;
  background: #9bb5ff;
  box-shadow: 0 1px 2px rgba(0, 0, 0, .2);
}

.home-about {
  width: 165px;
  height: 78px;
  margin: 10px 0 0 6px;
  padding-top: 2px;
  letter-spacing: .6px;
  background: #cfaaff;
}

.home-start {
  width: 139px;
  height: 31px;
  margin: 7px 0 0 17px;
  padding-right: 2px;
  background: #f66470;
}

.home-login {
  width: 139px;
  height: 29px;
  margin: 26px 0 0 17px;
  padding: 0 4px 1px 0;
  color: #f2222a;
  background: #faec85;
}

.home-copy {
  width: 175px;
  height: 19px;
  margin-top: 5px;
  font-size: 7.750px;
  white-space: nowrap;
  background: #fa7070;
}

.login-banner {
  width: 163px;
  height: 93px;
  margin: 16px 0 0 6px;
  padding-bottom: 9px;
  font-size: 12px;
  background: #a9ffc0;
}

.login-box {
  display: flex;
  flex-direction: column;
  align-items: flex-start;
  width: 162px;
  height: 200px;
  margin: 6px 0 0 7px;
  background: #ffc0c8;
}

.login-title {
  align-self: center;
  height: 14px;
  margin: 18px 6px 0 0;
  font-size: 12px;
  line-height: 14px;
  color: #222;
}

.login-label {
  height: 9px;
  margin-left: 21px;
  font-size: 7.500px;
  line-height: 9px;
  color: #333;
}

.label-user {
  margin-top: 21px;
}

.label-pass {
  margin-top: 14px;
}

.login-input {
  width: 108px;
  margin-left: 25px;
  background: #ffedcb;
}

.input-user {
  height: 14px;
  margin-top: 2px;
}

.input-pass {
  height: 15px;
  margin-top: 3px;
}

.login-reset {
  align-self: center;
  margin: 7px 0 0 2px;
  font-size: 7.500px;
  line-height: 10px;
  text-align: center;
  color: #333;
}

.login-submit {
  width: 67px;
  height: 19px;
  margin: 16px 0 0 45px;
  padding: 0 2px 2px 0;
  font-size: 12px;
  color: #111;
  background: #fff4a3;
}

.frame-reg {
  width: 180px;
  height: 756px;
}

.reg-banner {
  width: 149px;
  height: 46px;
  margin: 11px 0 0 13px;
  padding: 0 4px 1px 0;
  font-size: 9.500px;
  background: #fff2d1;
}

.reg-title {
  width: 148px;
  height: 41px;
  margin: 12px 0 0 14px;
  padding-right: 3px;
  font-size: 9.800px;
  background: #dfffe5;
}

.reg-date {
  width: 149px;
  height: 34px;
  margin: 4px 0 0 13px;
  padding: 8px 0 0 7px;
  font-size: 9.500px;
  line-height: 12px;
  color: #222;
  background: #ffe9f6;
}

.reg-form {
  display: flow-root;
  width: 148px;
  height: 553px;
  margin: 8px 0 0 14px;
  padding-top: 8px;
  background: #ffaca0;
}

.reg-label {
  height: 10px;
  padding-left: 5px;
  font-size: 9.500px;
  line-height: 10px;
  color: #222;
}

.reg-input {
  width: 128px;
  height: var(--h);
  margin: var(--gap) 0 0 10px;
  background: #d7d7d7;
}

.field-select { --gap: 4px; --h: 26px; }
.field-name { --gap: 6px; --h: 26px; margin-top: 13px; }
.field-email { --gap: 1px; --h: 31px; margin-top: 18px; }
.field-college { --gap: 1px; --h: 29px; margin-top: 22px; }
.field-year { --gap: 4px; --h: 33px; margin-top: 15px; }
.field-dept { --gap: 1px; --h: 39px; margin-top: 17px; }
.field-phone { --gap: 7px; --h: 37px; margin-top: 23px; }
.field-team { --gap: 6px; --h: 40px; margin-top: 17px; }

.reg-submit {
  width: 128px;
  height: 27px;
  margin: 13px 0 0 10px;
  padding-right: 2px;
  font-size: 9.500px;
  background: #f6ffcd;
}

.reg-copy {
  width: 148px;
  height: 29px;
  margin: 8px 0 0 14px;
  padding-right: 4px;
  font-size: 9.500px;
  color: #2c2440;
  background: #dfc9ff;
}

.thanks-banner {
  width: 155px;
  height: 103px;
  margin: 9px 0 0 11px;
  padding: 2px 8px 0 0;
  font-size: 12.500px;
  background: #c7ffcd;
}

.thanks-main {
  width: 155px;
  height: 194px;
  margin: 4px 0 0 11px;
  padding-top: 86px;
  background: #7b88ff;
}

.thanks-text {
  height: 14px;
  font-size: 11.700px;
  line-height: 14px;
  text-align: center;
  color: #eef;
}

.thanks-report {
  width: 94px;
  height: 24px;
  margin: 61px 0 0 32px;
  padding-right: 2px;
  font-size: 11.700px;
  background: #d7d7d7;
}

.thanks-copy {
  width: 155px;
  height: 63px;
  margin: 9px 0 0 11px;
  padding: 0 8px 4px 0;
  font-size: 12px;
  background: #ff6f68;
}

.frame-report {
  background: #89a4dc;
}

.report-title {
  width: 132px;
  height: 31px;
  margin: 9px 0 0 20px;
  padding-right: 10px;
  font-family: Lato, sans-serif;
  font-size: 11px;
  font-weight: 700;
  color: #1a1a1a;
  background: #bdeebc;
}

.report-table {
  width: 164px;
  height: 165px;
  margin: 38px 0 0 5px;
  border: 1px solid #4c5a55;
  border-collapse: collapse;
  table-layout: fixed;
  font-family: Lato, sans-serif;
  font-size: 6.800px;
  font-weight: 700;
  text-align: center;
  color: #222;
}

.report-table th,
.report-table td {
  padding: 0;
  border-left: 1px solid #4c5a55;
}

.report-table th {
  height: 23px;
  font-weight: 700;
  background: #d7d7d7;
  border-bottom: 1px solid #4c5a55;
}

.report-table th:nth-child(1),
.report-table td:nth-child(1) {
  width: 24px;
}

.report-table th:nth-child(2),
.report-table td:nth-child(2) {
  width: 42px;
}

.report-table th:nth-child(3),
.report-table td:nth-child(3) {
  width: 57px;
}

.report-table td {
  height: 28px;
}

.report-table td:nth-child(1) {
  background: #a5e2a5;
}

.report-table td:nth-child(2) {
  background: #d0efc0;
}

.report-table td:nth-child(3) {
  font-size: 4.200px;
  white-space: nowrap;
  background: #a0e6ae;
}

.report-table td:nth-child(4) {
  background: #8cd99b;
}

.report-table .tiny-name {
  font-size: 3.500px;
}

.report-table .nowrap-name {
  white-space: nowrap;
}

.report-dots {
  margin: 125px 0 0 -6px;
  font-size: 6px;
  font-weight: 700;
  line-height: 6px;
  letter-spacing: .2px;
  text-align: center;
  color: #1a1a2a;
}

/* windows taskbar */
.taskbar {
  display: flex;
  align-items: center;
  flex: 0 0 60px;
  padding-left: 14px;
  border-top: 1px solid #2e2e2e;
  color: #fff;
  background: #1e1e1e;
  font-family: Roboto, sans-serif;
  font-size: 14.500px;
}

.weather {
  width: 28px;
  height: 28px;
}

.task-apps {
  display: flex;
  align-items: center;
  margin-left: 493px;
}

.app {
  position: relative;
  display: flex;
  align-items: center;
  justify-content: center;
  width: 55px;
  height: 50px;
}

.app svg {
  width: 30px;
  height: 30px;
}

.app .note-icon {
  width: 24px;
}

.app .mcafee-icon {
  width: 26px;
}

.app-help svg {
  width: 36px;
  height: 36px;
}

.help-q {
  font-family: "Liberation Sans", sans-serif;
  font-size: 22px;
  font-weight: 700;
  fill: #fff;
}

.search-pill {
  display: flex;
  align-items: center;
  gap: 6px;
  width: 124px;
  height: 40px;
  margin: 0 5px;
  padding-left: 30px;
  border-radius: 20px;
  background: #2d2d2d;
}

.search-pill svg {
  width: 17px;
  height: 17px;
}

.app-active::before {
  content: "";
  position: absolute;
  left: 3px;
  top: 0;
  width: 49px;
  height: 50px;
  border-radius: 4px;
  background: #2c2c2c;
}

.app .ff-task {
  position: relative;
  width: 30px;
  height: 30px;
  margin-top: -4px;
}

.active-bar {
  position: absolute;
  left: 18px;
  bottom: 1px;
  width: 19px;
  height: 3px;
  border-radius: 2px;
  background: #4cc2ff;
}

.tray {
  display: flex;
  align-items: center;
  margin-left: auto;
  padding-right: 24px;
}

.tray-chev {
  width: 16px;
  height: 9px;
}

.tray-lang {
  width: 40px;
  margin-left: 12px;
  line-height: 20px;
  text-align: center;
}

.tray-wifi {
  width: 20px;
  height: 16px;
  margin-left: 17px;
}

.tray-sound {
  width: 20px;
  height: 16px;
  margin-left: 9px;
}

.tray-batt {
  width: 20px;
  height: 14px;
  margin-left: 12px;
}

.tray-clock {
  width: 76px;
  margin-left: 19px;
  line-height: 20px;
  text-align: right;
}

.tray-badge {
  width: 22px;
  height: 22px;
  margin-left: 9px;
  border-radius: 50%;
  font-size: 12px;
  line-height: 22px;
  text-align: center;
  color: #111;
  background: #4cc2ff;
}
```
